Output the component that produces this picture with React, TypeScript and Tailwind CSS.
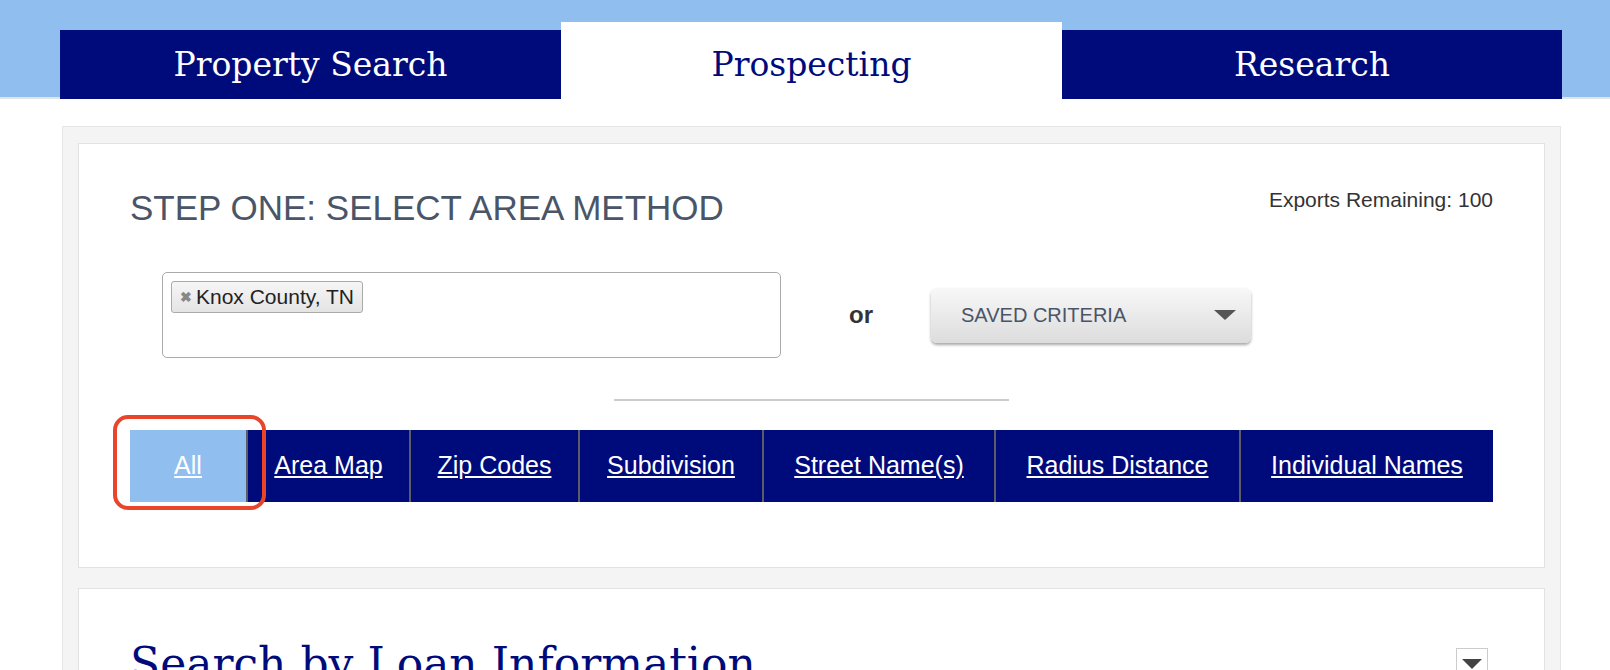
import { FC } from 'react';

const SANS = { fontFamily: '"Liberation Sans", Arial, Helvetica, sans-serif' };
const SLAB = { fontFamily: '"DejaVu Serif", "Liberation Serif", serif' };

const areaTabs = [
  { label: 'All', w: 'w-[116px]', active: true },
  { label: 'Area Map', w: 'w-[163px]' },
  { label: 'Zip Codes', w: 'w-[169px]' },
  { label: 'Subdivision', w: 'w-[184px]' },
  { label: 'Street Name(s)', w: 'w-[232px]' },
  { label: 'Radius Distance', w: 'w-[245px]' },
  { label: 'Individual Names', w: 'w-[254px]' },
];

const App: FC = () => {
  return (
    <div className="w-[1610px] h-[670px] overflow-hidden bg-white" style={SANS}>
      {/* top tabs */}
      <div className="h-[99px] bg-[#90bfef] border-b-2 border-[#e4e4e4] flex items-end pl-[60px]">
        <div className="flex items-end -mb-[2px]" style={SLAB}>
          <div className="w-[501px] h-[69px] bg-[#000b7b] text-white text-[33px] flex items-center justify-center">
            Property Search
          </div>
          <div className="w-[501px] h-[77px] pt-[8px] bg-white text-[#000b7b] text-[33px] flex items-center justify-center">
            Prospecting
          </div>
          <div className="w-[500px] h-[69px] bg-[#000b7b] text-white text-[33px] flex items-center justify-center">
            Research
          </div>
        </div>
      </div>

      {/* main panel */}
      <div className="ml-[62px] mt-[27px] w-[1499px] bg-[#f4f4f4] border border-[#e6e6e6] px-[15px] pt-[16px] pb-[20px] flex flex-col gap-[20px]">
        {/* step one card */}
        <div className="bg-white border border-[#e2e2e2] px-[51px] pt-[46px] pb-[65px]">
          <div className="flex justify-between items-start">
            <h2 className="text-[35px] leading-none text-[#4a5568]">STEP ONE: SELECT AREA METHOD</h2>
            <span className="text-[21px] leading-none text-[#333] -mt-[1px]">Exports Remaining: 100</span>
          </div>

          <div className="flex items-center mt-[47px] pl-[32px]">
            <div className="w-[619px] h-[86px] border border-[#aaa] rounded-[5px] px-[8px] pt-[8px]">
              <span className="inline-flex items-center h-[32px] pl-[8px] pr-[8px] gap-[4px] border border-[#aaa] rounded-[3px] bg-gradient-to-b from-[#f6f6f6] to-[#e4e4e4] text-[21px] text-[#222]">
                <span className="text-[14px] font-bold text-[#888]">✖</span>
                Knox County, TN
              </span>
            </div>
            <span className="ml-[68px] text-[24px] font-bold text-[#333]">or</span>
            <div className="ml-[58px] w-[320px] h-[55px] rounded-[6px] bg-gradient-to-b from-[#f8f8f8] to-[#dcdcdc] shadow-[0_2px_3px_rgba(0,0,0,0.35)] flex items-center justify-between pl-[30px] pr-[15px]">
              <span className="text-[20px] text-[#4a5568]">SAVED CRITERIA</span>
              <svg width="22" height="10" viewBox="0 0 22 10">
                <path d="M0 0 H22 L11 10 Z" fill="#555" />
              </svg>
            </div>
          </div>

          <div className="mt-[41px] mx-auto w-[395px] h-[2px] bg-[#cccccc]" />

          <div className="relative mt-[29px] flex h-[72px]">
            {areaTabs.map((t, i) => (
              <a
                key={t.label}
                href="#"
                className={`${t.w} h-full flex items-center justify-center text-[25px] text-white underline ${
                  t.active ? 'bg-[#90bfef]' : 'bg-[#000b7b]'
                } ${i > 0 ? 'border-l-2 border-[#5c5c66]' : ''}`}
              >
                {t.label}
              </a>
            ))}
            {/* annotation */}
            <div className="absolute left-[-17px] top-[-15px] w-[153px] h-[95px] border-4 border-[#e8452a] rounded-[15px]" />
          </div>
        </div>

        {/* loan card */}
        <div className="bg-white border border-[#e2e2e2] pl-[51px] pr-[56px] pt-[53px] h-[200px] flex justify-between items-start">
          <h2 className="text-[44px] leading-none text-[#000b7b]" style={SLAB}>
            Search by Loan Information
          </h2>
          <div className="mt-[6px] w-[32px] h-[32px] border border-[#ccc] flex items-center justify-center">
            <svg width="20" height="10" viewBox="0 0 20 10">
              <path d="M0 0 H20 L10 10 Z" fill="#444" />
            </svg>
          </div>
        </div>
      </div>
    </div>
  );
};

export default App;
